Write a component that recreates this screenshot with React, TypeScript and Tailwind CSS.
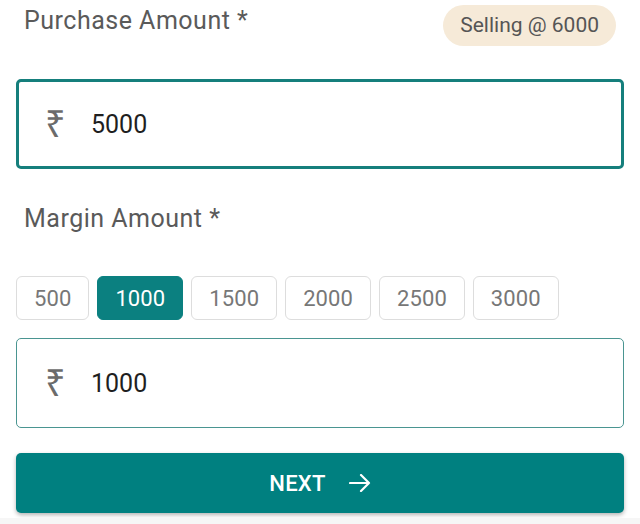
import React from 'react';

const chips = [500, 1000, 1500, 2000, 2500, 3000];

function AmountInput({ value, focused }: { value: string; focused?: boolean }) {
	return (
		<div
			className={
				focused
					? 'flex h-[90px] items-center rounded-[5px] border-[3px] border-[#157f7c] pl-[26px]'
					: 'flex h-[90px] items-center rounded-[5px] border border-[#4a9591] pl-[28px]'
			}
		>
			<span className="w-[23px] font-['Noto_Sans',sans-serif] text-[36px] leading-none text-[#6b6b6b]">₹</span>
			<span className="ml-[23px] text-[25px] leading-none text-[#1f1f1f]">{value}</span>
		</div>
	);
}

export default function App() {
	const selected = 1000;
	return (
		<div className="flex min-h-[524px] flex-col bg-white font-['Roboto',sans-serif]">
			<div className="flex flex-col px-4">
				{/* purchase row */}
				<div className="flex items-start justify-between pt-[5px]">
					<p className="mt-[1px] pl-2 text-[25px] leading-[30px] tracking-[0.5px] text-[#5a5a5a]">Purchase Amount *</p>
					<div className="mr-2 flex h-[41px] items-center rounded-full bg-[#f6ead8] px-[17px] text-[21px] text-[#555555]">
						Selling @ 6000
					</div>
				</div>

				<div className="mt-[33px]">
					<AmountInput value="5000" focused />
				</div>

				<p className="mt-[35px] pl-2 text-[25px] leading-[30px] tracking-[0.5px] text-[#5a5a5a]">Margin Amount *</p>

				{/* margin chips */}
				<div className="mt-[42px] flex gap-2">
					{chips.map((c) => (
						<button
							key={c}
							className={
								c === selected
									? 'flex h-[44px] items-center rounded-[6px] border border-[#0b8080] bg-[#0b8080] px-[17px] text-[22px] tracking-[0.1px] text-white'
									: 'flex h-[44px] items-center rounded-[6px] border border-[#dddddd] bg-white px-[17px] text-[22px] tracking-[0.1px] text-[#777777]'
							}
						>
							{c}
						</button>
					))}
				</div>

				<div className="mt-[18px]">
					<AmountInput value="1000" />
				</div>

				<button className="mt-[25px] flex h-[60px] items-center justify-center gap-[23px] rounded-[5px] bg-[#008080] text-[22px] font-medium tracking-[0.3px] text-white shadow-[0_2px_4px_rgba(0,0,0,0.3)]">
					NEXT
					<svg width="22" height="18" viewBox="0 0 22 18" fill="none" stroke="currentColor" strokeWidth="2.2" strokeLinecap="round" strokeLinejoin="round">
						<path d="M1 9H20M12 1l8 8-8 8" />
					</svg>
				</button>
			</div>
			<div className="mt-[5px] h-[6px] bg-[#f6f6f6]" />
		</div>
	);
}
